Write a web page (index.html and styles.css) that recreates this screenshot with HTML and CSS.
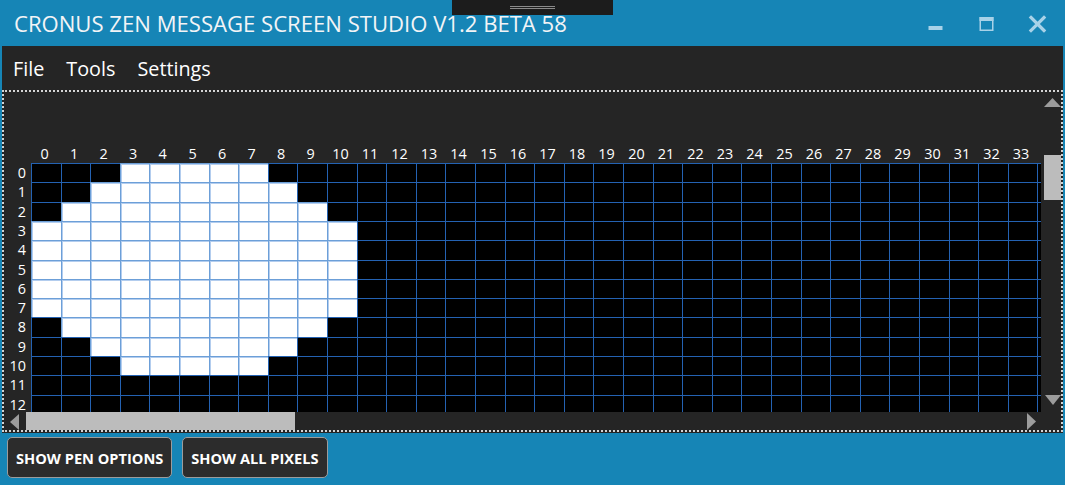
FILE: index.html
```html
<!DOCTYPE html>
<html>
<head>
<meta charset="utf-8">
<title>Cronus Zen Message Screen Studio</title>
<link rel="stylesheet" href="styles.css">
</head>
<body>
  <header class="titlebar">
    <div class="title">CRONUS ZEN MESSAGE SCREEN STUDIO V1.2 BETA 58</div>
    <div class="handle"><span class="handle-line"></span><span class="handle-line"></span></div>
    <div class="controls">
      <div class="ctl">
        <svg width="51" height="46" viewBox="0 0 51 46"><rect x="18.5" y="26" width="14" height="4" fill="#a8d2e8"/></svg>
      </div>
      <div class="ctl">
        <svg width="51" height="46" viewBox="0 0 51 46"><rect x="19.25" y="17.75" width="12.5" height="12.5" fill="none" stroke="#a8d2e8" stroke-width="1.5"/><rect x="18.5" y="17" width="14" height="4" fill="#a8d2e8"/></svg>
      </div>
      <div class="ctl">
        <svg width="51" height="46" viewBox="0 0 51 46"><path d="M19 17.5 L32 30.5 M32 17.5 L19 30.5" stroke="#a8d2e8" stroke-width="3.2" stroke-linecap="square"/></svg>
      </div>
    </div>
  </header>

  <main class="window">
    <nav class="menubar">
      <span class="menu-item">File</span>
      <span class="menu-item">Tools</span>
      <span class="menu-item">Settings</span>
    </nav>

    <section class="viewer">
      <div class="content">
        <div class="pixel-grid" id="grid"></div>
      </div>
      <div class="vscroll">
        <svg class="arrow-up" width="17" height="9" viewBox="0 0 17 9"><polygon points="0,9 8.5,0 17,9" fill="#9c9c9c"/></svg>
        <div class="vthumb"></div>
        <div class="spacer"></div>
        <svg class="arrow-down" width="16" height="10" viewBox="0 0 16 10"><polygon points="0,0 16,0 8,10" fill="#9c9c9c"/></svg>
      </div>
      <div class="hscroll">
        <svg class="arrow-left" width="9" height="16" viewBox="0 0 9 16"><polygon points="9,0 9,16 0,8" fill="#9c9c9c"/></svg>
        <div class="hthumb"></div>
        <div class="spacer"></div>
        <svg class="arrow-right" width="9" height="17" viewBox="0 0 9 17"><polygon points="0,0 9,8.5 0,17" fill="#9c9c9c"/></svg>
      </div>
      <div class="corner"></div>
    </section>
  </main>

  <footer class="footer">
    <button class="btn">SHOW PEN OPTIONS</button>
    <button class="btn">SHOW ALL PIXELS</button>
  </footer>

  <script src="script.js"></script>
</body>
</html>
```

FILE: styles.css
```css
* { box-sizing: border-box; }

html, body {
  margin: 0;
  padding: 0;
}

body {
  width: 1065px;
  height: 485px;
  overflow: hidden;
  background: #1685b6;
  font-family: "Open Sans", "Noto Sans", sans-serif;
  display: flex;
  flex-direction: column;
}

/* ---------- title bar ---------- */
.titlebar {
  height: 46px;
  flex: none;
  display: flex;
  align-items: flex-start;
  position: relative;
}

.title {
  padding: 8px 0 0 14px;
  font-size: 22.1px;
  line-height: 30px;
  color: #f2f4f6;
  white-space: nowrap;
  flex: 1;
}

.handle {
  position: absolute;
  left: 452px;
  top: 0;
  width: 161px;
  height: 15px;
  background: #1c1c1c;
  display: flex;
  flex-direction: column;
  align-items: center;
  padding-top: 6px;
  gap: 1px;
}

.handle-line {
  width: 45px;
  height: 1px;
  background: #8a8a8a;
}

.controls {
  display: flex;
  margin-right: 2px;
}

.ctl {
  width: 51px;
  height: 46px;
}

.ctl svg { display: block; }

/* ---------- window ---------- */
.window {
  flex: none;
  height: 387px;
  margin: 0 2px;
  background: #252525;
  display: flex;
  flex-direction: column;
}

.menubar {
  height: 44px;
  flex: none;
  display: flex;
  align-items: center;
  gap: 22px;
  padding-left: 11px;
}

.menu-item {
  font-size: 19.8px;
  color: #ffffff;
}

.viewer {
  height: 342px;
  border: 2px dotted #d4d4d4;
  display: grid;
  grid-template-columns: 1037px 1fr;
  grid-template-rows: 320px 18px;
}

.content {
  overflow: hidden;
  padding-top: 53px;
  position: relative;
}

.pixel-grid {
  display: grid;
  grid-template-columns: 27px repeat(7, 30px 29px 30px 29px 30px);
  grid-template-rows: 18px 19px 20px 19px 19px 20px 19px 19px 19px 20px 19px 19px 20px 19px;
  width: max-content;
}

.col-label {
  color: #ffffff;
  font-size: 14.4px;
  line-height: 18px;
  text-align: center;
  padding-right: 3px;
}

.row-label {
  color: #ffffff;
  font-size: 14.4px;
  line-height: 19px;
  text-align: right;
  padding-right: 5px;
}

.cell {
  background: #000000;
  border-left: 1px solid #2462b2;
  border-top: 1px solid #2462b2;
}

.cell.on {
  background: #ffffff;
  border-color: #6c9fd8;
  box-shadow: inset 1px 1px 0 #b3cdee;
}

/* ---------- scrollbars ---------- */
.vscroll {
  display: flex;
  flex-direction: column;
  align-items: flex-start;
  padding: 6px 0 7px 3px;
}

.arrow-up { flex: none; }

.vthumb {
  flex: none;
  width: 17px;
  height: 45px;
  margin-top: 48px;
  background: #bcbcbc;
}

.spacer { flex: 1; }

.arrow-down {
  flex: none;
  margin-left: 1px;
}

.hscroll {
  display: flex;
  align-items: center;
  padding: 0 5px 0 6px;
}

.arrow-left {
  flex: none;
  margin-top: 1px;
}

.hthumb {
  flex: none;
  width: 269px;
  height: 18px;
  margin-left: 7px;
  background: #bcbcbc;
}

.arrow-right { flex: none; }

/* ---------- footer ---------- */
.footer {
  flex: 1;
  display: flex;
  align-items: flex-start;
  gap: 10px;
  padding: 4px 7px;
}

.btn {
  height: 41px;
  padding: 0 8px;
  background: #2c2c2c;
  border: 1px solid #9c9c9c;
  border-radius: 5px;
  color: #ffffff;
  font-family: "Open Sans", "Noto Sans", sans-serif;
  font-weight: 700;
  font-size: 14.6px;
}
```

FILE: script.js
```js
(function () {
  var grid = document.getElementById('grid');
  var COLS = 35, ROWS = 13;
  var on = {
    0: [3, 7], 1: [2, 8], 2: [1, 9], 3: [0, 10], 4: [0, 10], 5: [0, 10],
    6: [0, 10], 7: [0, 10], 8: [1, 9], 9: [2, 8], 10: [3, 7]
  };
  var corner = document.createElement('div');
  grid.appendChild(corner);
  for (var c = 0; c < COLS; c++) {
    var l = document.createElement('div');
    l.className = 'col-label';
    l.textContent = c;
    grid.appendChild(l);
  }
  for (var r = 0; r < ROWS; r++) {
    var rl = document.createElement('div');
    rl.className = 'row-label';
    rl.textContent = r;
    grid.appendChild(rl);
    for (var k = 0; k < COLS; k++) {
      var cell = document.createElement('div');
      var span = on[r];
      cell.className = 'cell' + (span && k >= span[0] && k <= span[1] ? ' on' : '');
      grid.appendChild(cell);
    }
  }
})();
```
